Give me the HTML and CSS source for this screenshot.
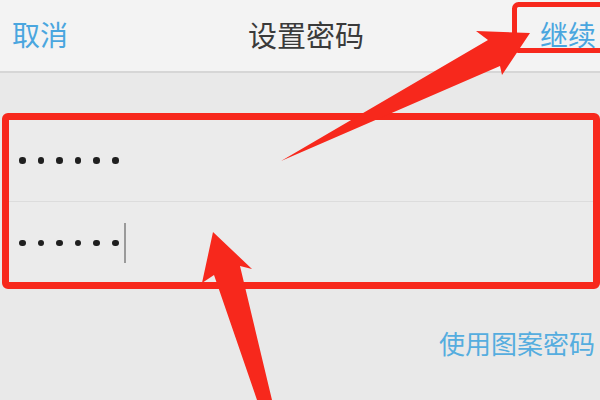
FILE: index.html
```html
<!DOCTYPE html>
<html lang="zh">
<head>
<meta charset="utf-8">
<link rel="stylesheet" href="styles.css">
</head>
<body>
<div class="page">
  <header class="nav">
    <span class="nav-btn">取消</span>
    <span class="nav-title">设置密码</span>
    <span class="nav-btn">继续</span>
  </header>
  <section class="form">
    <div class="row">
      <span class="dots" aria-label="••••••"><i></i><i></i><i></i><i></i><i></i><i></i></span>
    </div>
    <div class="row">
      <span class="dots" aria-label="••••••"><i></i><i></i><i></i><i></i><i></i><i></i></span>
      <span class="cursor"></span>
    </div>
  </section>
  <div class="alt"><span class="alt-link">使用图案密码</span></div>

  <svg class="arrows" width="600" height="400" viewBox="0 0 600 400">
    <rect class="mark" x="514.5" y="4.5" width="100" height="46" rx="4" />
    <polygon points="281,161 488,40 476,31 530,33 502,75 500,66" />
    <polygon points="257,400 214,275 202,283 213,232 252,269 240,266 272,400" />
  </svg>
</div>
</body>
</html>
```
FILE: styles.css
```css
* { box-sizing: border-box; }
html, body { margin: 0; padding: 0; }
body {
  width: 600px;
  height: 400px;
  overflow: hidden;
  background: #e9e9e9;
  font-family: "Noto Sans CJK SC", "Noto Sans", sans-serif;
}
.page {
  position: relative;
  width: 600px;
  height: 400px;
}
.nav {
  height: 73px;
  background: #f3f3f3;
  border-bottom: 2px solid #d6d6d6;
  display: flex;
  align-items: center;
  justify-content: space-between;
  padding: 0 4px 4px 12px;
}
.nav-btn {
  font-size: 28px;
  color: #4aa6df;
}
.nav-title {
  font-size: 29px;
  color: #3a3a3a;
  margin-left: 4px;
}
.form {
  margin: 40px 0 0 2px;
  border: 7px solid #f7281c;
  border-radius: 6px;
  background: #ebebeb;
  display: flex;
  flex-direction: column;
}
.row {
  height: 81px;
  display: flex;
  align-items: center;
  padding-left: 10px;
}
.row + .row {
  border-top: 1px solid #dcdcdc;
  height: 81px;
  padding-top: 2px;
}
.dots {
  display: flex;
  gap: 12px;
}
.dots i {
  display: block;
  width: 6.6px;
  height: 6.6px;
  border-radius: 50%;
  background: #1f1f1f;
}
.cursor {
  width: 2px;
  height: 40px;
  background: #9a9a9a;
  margin-left: 5px;
}
.alt {
  display: flex;
  justify-content: flex-end;
  padding: 35px 5px 0 0;
}
.alt-link {
  font-size: 26px;
  color: #55addf;
}
.arrows {
  position: absolute;
  left: 0;
  top: 0;
}
.arrows polygon { fill: #f7281c; }
.arrows .mark {
  fill: none;
  stroke: #f7281c;
  stroke-width: 5;
}
```
